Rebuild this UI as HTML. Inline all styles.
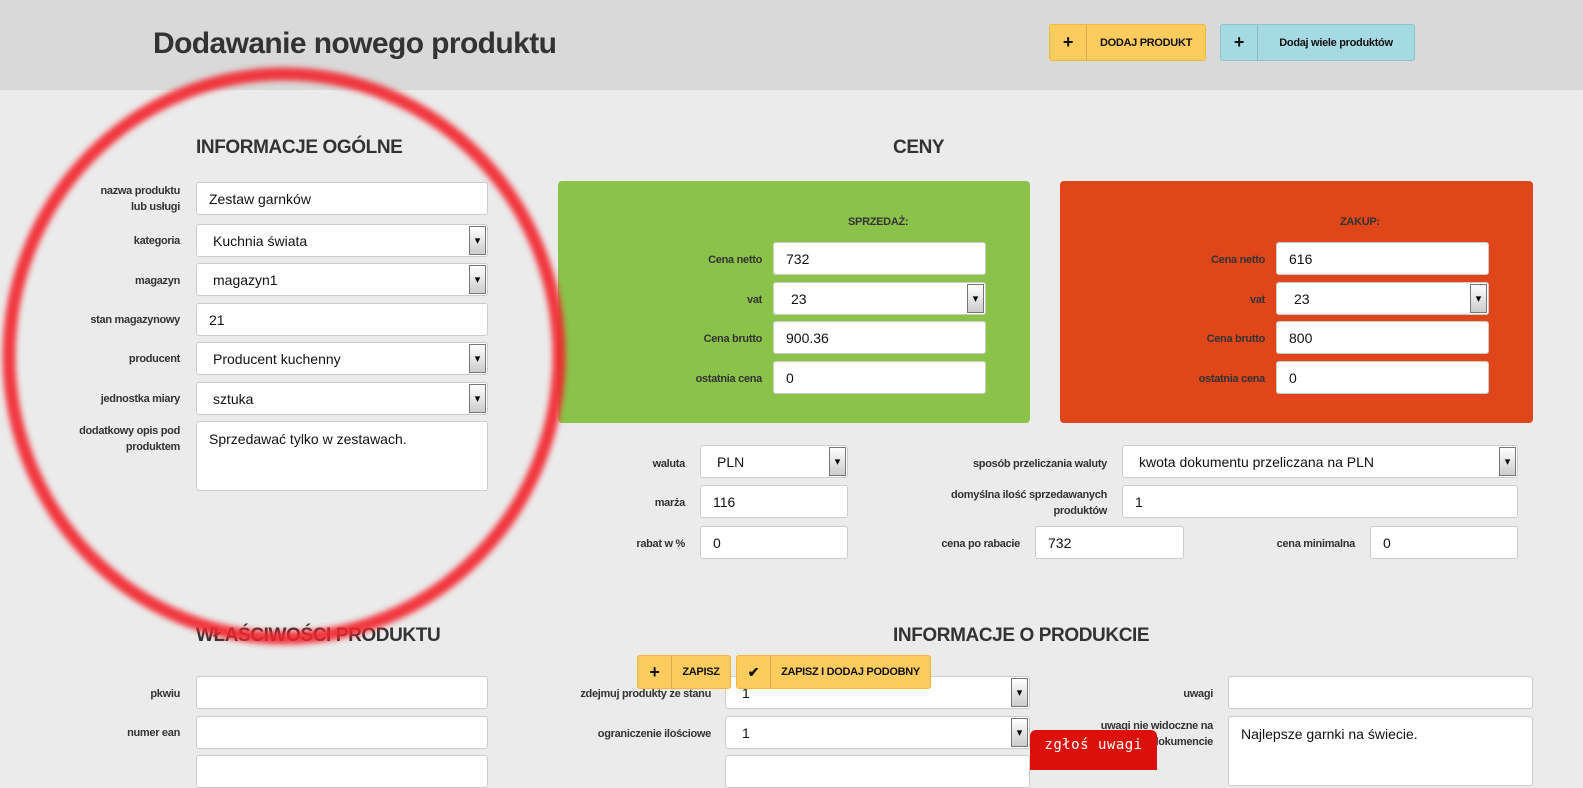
<!DOCTYPE html>
<html><head><meta charset="utf-8">
<style>
*{box-sizing:border-box;margin:0;padding:0}
body{width:1583px;height:765px;overflow:hidden;background:#ebebeb;font-family:"Liberation Sans Narrow","Liberation Sans",sans-serif;color:#333;position:relative}
.hdr{position:absolute;left:0;top:0;width:1583px;height:90px;background:#d9d9d9}
.title{position:absolute;left:153px;top:27px;font-size:30px;font-weight:bold;color:#333;letter-spacing:-0.6px}
.btn{position:absolute;height:37px;border-radius:3px;font-size:11px;font-weight:bold;color:#111;display:flex;align-items:center;letter-spacing:-0.3px}
.btn .ic{width:37px;height:100%;display:flex;align-items:center;justify-content:center;font-size:18px;border-right:1px solid rgba(0,0,0,.15)}
.btn .tx{flex:1;text-align:center;white-space:nowrap}
.y{background:#fdcc5f;border:1px solid #f2b73b}
.b{background:#a6dae3;border:1px solid #8ec3cd}
.h{position:absolute;font-size:19px;font-weight:bold;color:#333;letter-spacing:-0.4px}
.l{position:absolute;font-size:11px;font-weight:bold;color:#333;text-align:right;line-height:16px;letter-spacing:-0.3px;white-space:nowrap}
.f{position:absolute;background:#fff;border:1px solid #ccc;border-radius:3px;font-size:14px;color:#111;padding-left:12px;display:flex;align-items:center;font-family:"Liberation Sans",sans-serif}
.f.ta{align-items:flex-start;padding-top:9px}
.s::after{content:"▾";position:absolute;right:1px;top:1px;bottom:1px;width:15px;border:1px solid #777;background:linear-gradient(#fff,#ccc);font-size:11px;display:flex;align-items:center;justify-content:center;color:#000}
.pn{position:absolute;top:181px;height:242px;border-radius:4px}
</style></head><body>
<div class="hdr"></div>
<div class="title">Dodawanie nowego produktu</div>
<div class="btn y" style="left:1049px;top:24px;width:157px"><div class="ic">+</div><div class="tx">DODAJ PRODUKT</div></div>
<div class="btn b" style="left:1220px;top:24px;width:195px"><div class="ic">+</div><div class="tx">Dodaj wiele produktów</div></div>

<div class="h" style="left:196px;top:137px">INFORMACJE OGÓLNE</div>
<div class="l" style="right:1403px;top:183px">nazwa produktu<br>lub usługi</div>
<div class="f" style="left:196px;top:182px;width:292px;height:33px">Zestaw garnków</div>
<div class="l" style="right:1403px;top:233px">kategoria</div>
<div class="f s" style="left:196px;top:224px;width:292px;height:33px;padding-left:16px">Kuchnia świata</div>
<div class="l" style="right:1403px;top:273px">magazyn</div>
<div class="f s" style="left:196px;top:263px;width:292px;height:33px;padding-left:16px">magazyn1</div>
<div class="l" style="right:1403px;top:312px">stan magazynowy</div>
<div class="f" style="left:196px;top:303px;width:292px;height:33px">21</div>
<div class="l" style="right:1403px;top:351px">producent</div>
<div class="f s" style="left:196px;top:342px;width:292px;height:33px;padding-left:16px">Producent kuchenny</div>
<div class="l" style="right:1403px;top:391px">jednostka miary</div>
<div class="f s" style="left:196px;top:382px;width:292px;height:33px;padding-left:16px">sztuka</div>
<div class="l" style="right:1403px;top:423px">dodatkowy opis pod<br>produktem</div>
<div class="f ta" style="left:196px;top:421px;width:292px;height:70px">Sprzedawać tylko w zestawach.</div>

<div class="h" style="left:893px;top:137px">CENY</div>
<div class="pn" style="left:558px;width:472px;background:#8bc34a"></div>
<div class="pn" style="left:1060px;width:473px;background:#df4619"></div>
<div class="l" style="left:848px;top:214px">SPRZEDAŻ:</div>
<div class="l" style="left:1340px;top:214px">ZAKUP:</div>

<div class="l" style="right:821px;top:252px">Cena netto</div>
<div class="f" style="left:773px;top:242px;width:213px;height:33px">732</div>
<div class="l" style="right:821px;top:292px">vat</div>
<div class="f s" style="left:773px;top:282px;width:213px;height:33px;padding-left:17px">23</div>
<div class="l" style="right:821px;top:331px">Cena brutto</div>
<div class="f" style="left:773px;top:321px;width:213px;height:33px">900.36</div>
<div class="l" style="right:821px;top:371px">ostatnia cena</div>
<div class="f" style="left:773px;top:361px;width:213px;height:33px">0</div>

<div class="l" style="right:318px;top:252px">Cena netto</div>
<div class="f" style="left:1276px;top:242px;width:213px;height:33px">616</div>
<div class="l" style="right:318px;top:292px">vat</div>
<div class="f s" style="left:1276px;top:282px;width:213px;height:33px;padding-left:17px">23</div>
<div class="l" style="right:318px;top:331px">Cena brutto</div>
<div class="f" style="left:1276px;top:321px;width:213px;height:33px">800</div>
<div class="l" style="right:318px;top:371px">ostatnia cena</div>
<div class="f" style="left:1276px;top:361px;width:213px;height:33px">0</div>

<div class="l" style="right:898px;top:456px">waluta</div>
<div class="f s" style="left:700px;top:445px;width:148px;height:33px;padding-left:16px">PLN</div>
<div class="l" style="right:898px;top:495px">marża</div>
<div class="f" style="left:700px;top:485px;width:148px;height:33px">116</div>
<div class="l" style="right:898px;top:536px">rabat w %</div>
<div class="f" style="left:700px;top:526px;width:148px;height:33px">0</div>

<div class="l" style="right:476px;top:456px">sposób przeliczania waluty</div>
<div class="f s" style="left:1122px;top:445px;width:396px;height:33px;padding-left:16px">kwota dokumentu przeliczana na PLN</div>
<div class="l" style="right:476px;top:487px">domyślna ilość sprzedawanych<br>produktów</div>
<div class="f" style="left:1122px;top:485px;width:396px;height:33px">1</div>
<div class="l" style="right:563px;top:536px">cena po rabacie</div>
<div class="f" style="left:1035px;top:526px;width:149px;height:33px">732</div>
<div class="l" style="right:228px;top:536px">cena minimalna</div>
<div class="f" style="left:1370px;top:526px;width:148px;height:33px">0</div>

<div class="h" style="left:196px;top:625px">WŁAŚCIWOŚCI PRODUKTU</div>
<div class="l" style="right:1403px;top:686px">pkwiu</div>
<div class="f" style="left:196px;top:676px;width:292px;height:33px"></div>
<div class="l" style="right:1403px;top:725px">numer ean</div>
<div class="f" style="left:196px;top:716px;width:292px;height:33px"></div>
<div class="f" style="left:196px;top:755px;width:292px;height:33px"></div>

<div class="h" style="left:893px;top:625px">INFORMACJE O PRODUKCIE</div>
<div class="l" style="right:872px;top:686px">zdejmuj produkty ze stanu</div>
<div class="f s" style="left:725px;top:676px;width:305px;height:33px;padding-left:16px">1</div>
<div class="l" style="right:872px;top:726px">ograniczenie ilościowe</div>
<div class="f s" style="left:725px;top:716px;width:305px;height:33px;padding-left:16px">1</div>
<div class="f" style="left:725px;top:755px;width:305px;height:33px"></div>
<div class="l" style="right:370px;top:686px">uwagi</div>
<div class="f" style="left:1228px;top:676px;width:305px;height:33px"></div>
<div class="l" style="right:370px;top:718px">uwagi nie widoczne na<br>dokumencie</div>
<div class="f ta" style="left:1228px;top:716px;width:305px;height:70px">Najlepsze garnki na świecie.</div>

<div class="btn y" style="left:637px;top:655px;width:94px;height:34px"><div class="ic" style="width:34px">+</div><div class="tx">ZAPISZ</div></div>
<div class="btn y" style="left:736px;top:655px;width:195px;height:34px"><div class="ic" style="width:34px;font-size:14px">✔</div><div class="tx">ZAPISZ I DODAJ PODOBNY</div></div>

<div style="position:absolute;left:1030px;top:730px;width:127px;height:40px;background:#dd0f0b;border-radius:6px 6px 0 0;color:#fff;font-size:14px;text-align:center;padding-top:7px;letter-spacing:0.5px;font-family:'DejaVu Sans Mono','Liberation Mono',monospace">zgłoś uwagi</div>

<svg style="position:absolute;left:0;top:0" width="1583" height="765">
<defs><filter id="bl" x="-20%" y="-20%" width="140%" height="140%"><feGaussianBlur stdDeviation="3"/></filter></defs>
<ellipse cx="284" cy="356" rx="275" ry="282" fill="none" stroke="#f2262b" stroke-opacity="0.9" stroke-width="13" filter="url(#bl)"/>
</svg>
</body></html>
